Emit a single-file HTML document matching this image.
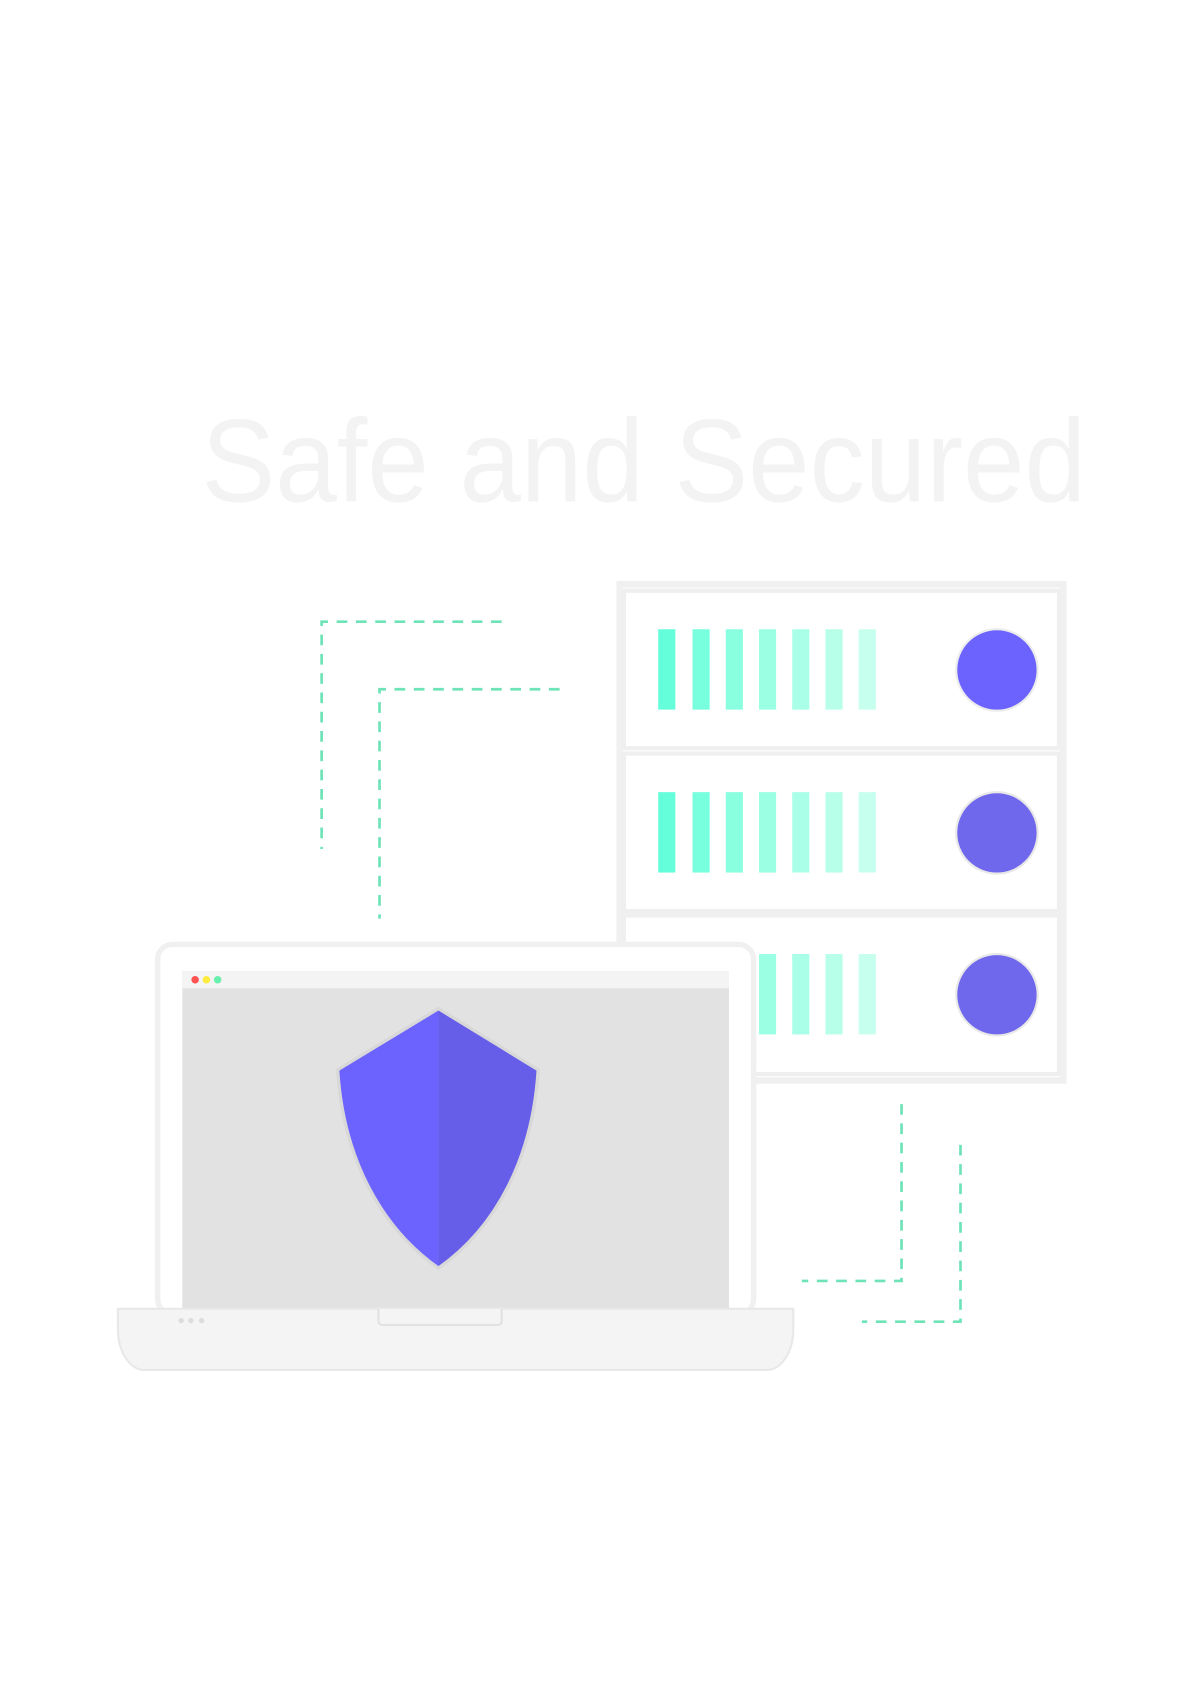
<!DOCTYPE html>
<html><head><style>html,body{margin:0;padding:0;background:#fff}svg{display:block}</style></head><body>
<svg width="1191" height="1684" viewBox="0 0 1111 1571" xmlns="http://www.w3.org/2000/svg">
<rect width="1111" height="1571" fill="#fff"/>
<text x="188" y="468" font-family="Liberation Sans, sans-serif" font-size="110" fill="#f3f3f3" textLength="825" lengthAdjust="spacingAndGlyphs">Safe and Secured</text>
<g fill="none" stroke="#6ee3b8" stroke-width="2.5" stroke-dasharray="10 8">
<path d="M468 580H300V792"/>
<path d="M522 643H354V857"/>
<path d="M841 1030V1195H748"/>
<path d="M896 1068V1233H804"/>
</g>
<rect x="578" y="545" width="414" height="463" fill="#fff" stroke="#f0f0f0" stroke-width="6"/>
<g fill="#fff" stroke="#efefef" stroke-width="4">
<rect x="582" y="551" width="406" height="147"/>
<rect x="582" y="703" width="406" height="147"/>
<rect x="582" y="854" width="406" height="148"/>
</g>
<g>
<g id="bars">
<rect x="614" y="587" width="16" height="75" fill="#64ffda"/>
<rect x="646" y="587" width="16" height="75" fill="#78ffdd"/>
<rect x="677" y="587" width="16" height="75" fill="#89ffe0"/>
<rect x="708" y="587" width="16" height="75" fill="#9bffe4"/>
<rect x="739" y="587" width="16" height="75" fill="#a9ffe7"/>
<rect x="770" y="587" width="16" height="75" fill="#b8ffea"/>
<rect x="801" y="587" width="16" height="75" fill="#c6ffee"/>
</g>
<use href="#bars" y="152"/>
<use href="#bars" y="303"/>
</g>
<circle cx="930" cy="625" r="38" fill="#6c63ff" stroke="#ececec" stroke-width="2"/>
<circle cx="930" cy="777" r="38" fill="#7068ec" stroke="#e8e8e8" stroke-width="2"/>
<circle cx="930" cy="928" r="38" fill="#7068ec" stroke="#e8e8e8" stroke-width="2"/>
<rect x="147" y="881" width="556" height="345" rx="14" fill="#fff" stroke="#f0f0f0" stroke-width="5"/>
<rect x="170" y="906" width="510" height="316" fill="#e2e2e2"/>
<rect x="170" y="906" width="510" height="16" fill="#f4f4f4"/>
<circle cx="182" cy="914" r="3.5" fill="#ff5252"/>
<circle cx="192.5" cy="914" r="3.5" fill="#ffeb3b"/>
<circle cx="203" cy="914" r="3.5" fill="#69f0ae"/>
<path d="M409 941L315 998C320 1080 355 1145 409 1183Z" fill="#6c63ff"/>
<path d="M409 941L502 998C497 1080 463 1145 409 1183Z" fill="#665ee8"/>
<path d="M409 941L315 998C320 1080 355 1145 409 1183C463 1145 497 1080 502 998Z" fill="none" stroke="#d8d8d8" stroke-width="3"/>
<path d="M110 1221H740V1240C740 1262 728 1278 716 1278H134C122 1278 110 1262 110 1240Z" fill="#f4f4f4" stroke="#e8e8e8" stroke-width="2"/>
<path d="M353 1221V1232Q353 1236 357 1236H464Q468 1236 468 1232V1221" fill="#f4f4f4" stroke="#e2e2e2" stroke-width="2"/>
<circle cx="169" cy="1232" r="2.5" fill="#dcdcdc"/>
<circle cx="178" cy="1232" r="2.5" fill="#dcdcdc"/>
<circle cx="188" cy="1232" r="2.5" fill="#dcdcdc"/>
</svg>
</body></html>
